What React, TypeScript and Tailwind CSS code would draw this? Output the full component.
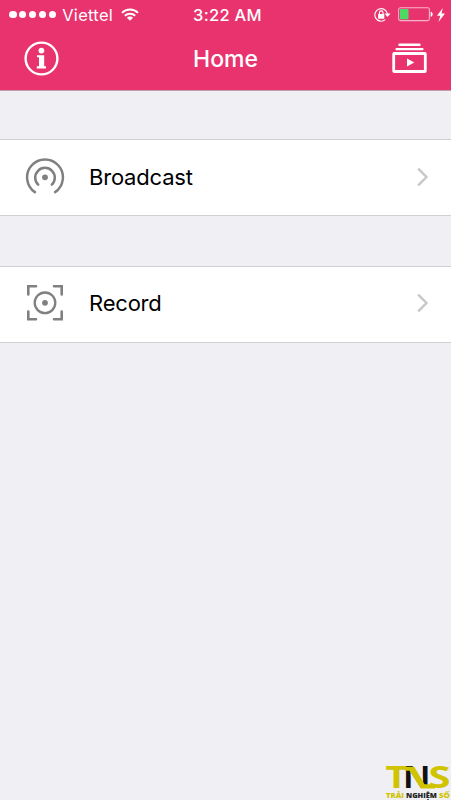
import type { ReactNode } from 'react';

function Wifi() {
  return (
    <svg width="18" height="13" viewBox="0 0 18 13" fill="none" stroke="white" strokeWidth="2">
      <path d="M1 4.9C5.4 0.4 12.6 0.4 17 4.9" />
      <path d="M3.8 7.8C6.7 4.9 11.3 4.9 14.2 7.8" />
      <path d="M9 12.8L5.9 9.7C7.5 8 10.5 8 12.1 9.7Z" fill="white" stroke="none" />
    </svg>
  );
}

function RotationLock() {
  return (
    <svg width="18" height="16" viewBox="0 0 18 16" fill="none" stroke="white" strokeWidth="1.1">
      <path d="M11.3 12.7A6.3 6.3 0 1 1 13.4 7" />
      <path d="M10.5 6.5H16.5L13.5 10Z" fill="white" stroke="none" />
      <rect x="4.1" y="6.9" width="6.2" height="4.8" rx=".4" fill="white" stroke="none" />
      <path d="M5.4 7.3V5.7a1.8 1.8 0 0 1 3.6 0V7.3" />
    </svg>
  );
}

function Battery() {
  return (
    <svg width="36" height="15" viewBox="0 0 36 15" fill="none">
      <rect x=".6" y=".8" width="30.8" height="12.8" rx="1.8" stroke="#f6b3ca" strokeWidth="1.1" />
      <rect x="2" y="2.1" width="8.5" height="10.2" rx=".6" fill="#4cd964" />
      <path d="M32.6 4.8C35.4 5.4 35.4 9.2 32.6 9.8Z" fill="white" />
    </svg>
  );
}

function Chevron() {
  return (
    <svg width="12" height="20" viewBox="0 0 12 20" fill="none" stroke="#c7c7cc" strokeWidth="2.4">
      <path d="M1.2 1.7L9.5 10L1.2 18.3" />
    </svg>
  );
}

function BroadcastIcon() {
  return (
    <svg width="40" height="40" viewBox="0 0 40 40" fill="none" stroke="#808080" strokeWidth="2.5" strokeLinecap="round">
      <path d="M9.9 35.1A17.9 17.9 0 1 1 30.1 35.1" />
      <path d="M13.2 27.7A9.8 9.8 0 1 1 26.8 27.7" />
      <circle cx="20" cy="20.3" r="2.9" fill="#808080" stroke="none" />
    </svg>
  );
}

function RecordIcon() {
  return (
    <svg width="40" height="40" viewBox="0 0 40 40" fill="none" stroke="#808080" strokeWidth="2.6" strokeLinecap="round">
      <path d="M11 3.3H3.3V11.5M29 3.3H36.7V11.5M3.3 28.5V36.2H11M36.7 28.5V36.2H29" />
      <circle cx="20" cy="19.8" r="10.3" strokeWidth="2.3" />
      <circle cx="20" cy="19.8" r="2.9" fill="#808080" stroke="none" />
    </svg>
  );
}

function Row({ icon, children, className }: { icon: ReactNode; children: ReactNode; className: string }) {
  return (
    <button className={`flex h-[77px] w-full items-center border-y border-[#d0d0d3] bg-white pr-[22px] pl-[25px] text-left ${className}`}>
      {icon}
      <span className="ml-6 flex-1 text-[22px] leading-7 tracking-[-0.2px] text-black">{children}</span>
      <Chevron />
    </button>
  );
}

export default function App() {
  return (
    <div className="flex h-[800px] w-full flex-col overflow-hidden bg-[#efeff4] font-['Inter','Liberation_Sans',sans-serif]">
      <header className="h-[91px] shrink-0 border-b border-[#c2a0ad] bg-[#e8336f] text-white">
        <div className="grid h-[29px] grid-cols-[1fr_auto_1fr] items-center pr-[6px] pl-[9px]">
          <div className="flex items-center">
            <div className="flex gap-[2.3px]">
              {[0, 1, 2, 3, 4].map((dot) => (
                <span key={dot} className="size-[7.6px] rounded-full bg-white" />
              ))}
            </div>
            <span className="mr-[8px] ml-[6px] text-[16.5px] leading-5 font-normal tracking-[0.3px]">Viettel</span>
            <span className="-mt-px"><Wifi /></span>
          </div>
          <span className="pl-px text-[16.5px] leading-5 font-medium tracking-[0.3px]">3:22 AM</span>
          <div className="flex items-center justify-end">
            <RotationLock />
            <span className="ml-[6px]"><Battery /></span>
            <svg className="ml-[3px]" width="8" height="14" viewBox="0 0 8 14" fill="white">
              <path d="M5.8 0L0 7.7H3.3L1.5 14L8 5.6H4.5Z" />
            </svg>
          </div>
        </div>
        <div className="grid h-[58px] grid-cols-[1fr_auto_1fr] items-center px-6">
          <svg width="35" height="35" viewBox="0 0 35 35" fill="white">
            <circle cx="17.5" cy="17.5" r="15.9" fill="none" stroke="white" strokeWidth="2.4" />
            <circle cx="17.4" cy="9.6" r="2.9" />
            <path d="M13 14.2H20.2V25.3H22V27.4H12.8V25.3H15V16.2H13Z" />
          </svg>
          <h1 className="pt-px text-[23px] leading-7 font-medium">Home</h1>
          <svg className="justify-self-end" width="35" height="31" viewBox="0 0 35 31" fill="none" stroke="white" strokeLinecap="round">
            <path d="M7.5 1.8H27.5M4.6 6.1H30.4" strokeWidth="2.4" />
            <rect x="1.7" y="10.5" width="31.6" height="18" rx=".6" strokeWidth="2.8" />
            <path d="M15 15.4L22.3 19.5L15 23.6Z" fill="white" stroke="none" />
          </svg>
        </div>
      </header>
      <main className="flex flex-1 flex-col gap-[50px] pt-12">
        <Row icon={<BroadcastIcon />} className="pb-px">Broadcast</Row>
        <Row icon={<RecordIcon />} className="pb-[3px]">Record</Row>
      </main>
      <footer className="flex h-[37px] shrink-0 justify-end">
        <svg className="overflow-visible" width="66" height="37" viewBox="0 0 66 37" fontFamily="Open Sans, Liberation Sans, sans-serif">
          <g fontSize="30" fontWeight="700">
            <text x="0.5" y="25.3" textLength="22" lengthAdjust="spacingAndGlyphs" fill="#d0c400">T</text>
            <text x="18" y="25.3" textLength="27.5" lengthAdjust="spacingAndGlyphs" fill="#111111">N</text>
            <text x="43.5" y="25.3" textLength="22" lengthAdjust="spacingAndGlyphs" fill="#d0c400">S</text>
          </g>
          {/* Ribbon that links the three letters of the mark */}
          <path d="M20 3.8H29.2L39.5 21.3H50V25.5H36L24.5 7.8H20Z" fill="#d0c400" />
          <g fontSize="6.5" fontWeight="800">
            <text x="1" y="35" textLength="18" lengthAdjust="spacingAndGlyphs" fill="#d0c400">TRẢI</text>
            <text x="21" y="35" textLength="31" lengthAdjust="spacingAndGlyphs" fill="#222222">NGHIỆM</text>
            <text x="54" y="35" textLength="11" lengthAdjust="spacingAndGlyphs" fill="#d0c400">SỐ</text>
          </g>
        </svg>
      </footer>
    </div>
  );
}
